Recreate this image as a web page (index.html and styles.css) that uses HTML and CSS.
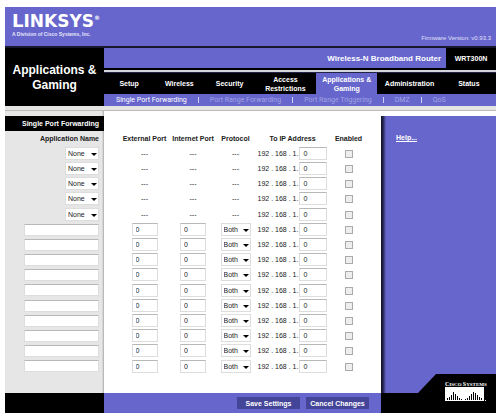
FILE: index.html
```html
<!DOCTYPE html>
<html lang="en">
<head>
<meta charset="utf-8">
<title>Single Port Forwarding</title>
<link rel="stylesheet" href="styles.css">
</head>
<body>
<div class="page">
  <header class="brand">
    <div>
      <div class="logo"><span class="logo-cap">L</span>INKSYS<sup>®</sup></div>
      <div class="tagline">A Division of Cisco Systems, Inc.</div>
    </div>
    <div class="firmware">Firmware Version: v0.93.3</div>
  </header>

  <div class="masthead">
    <h1 class="section-title">Applications &amp; Gaming</h1>
    <div class="masthead-main">
      <div class="product">
        <span class="product-name">Wireless-N Broadband Router</span>
        <span class="model">WRT300N</span>
      </div>
      <nav class="tabs">
        <a href="#">Setup</a>
        <a href="#">Wireless</a>
        <a href="#">Security</a>
        <a href="#" class="medium">Access Restrictions</a>
        <a href="#" class="medium active">Applications &amp; Gaming</a>
        <a href="#" class="wide">Administration</a>
        <a href="#" class="last">Status</a>
      </nav>
      <nav class="subtabs">
        <a href="#" class="active">Single Port Forwarding</a><i></i>
        <a href="#">Port Range Forwarding</a><i></i>
        <a href="#">Port Range Triggering</a><i></i>
        <a href="#">DMZ</a><i></i>
        <a href="#">QoS</a>
      </nav>
    </div>
  </div>

  <div class="divider"></div>

  <form class="content">
    <div class="panel">
      <div class="panel-top"></div>
      <h2 class="panel-title">Single Port Forwarding</h2>
      <table class="ports">
        <colgroup><col class="c-app"><col class="c-ext"><col class="c-int"><col class="c-proto"><col class="c-ip"><col class="c-on"></colgroup>
        <thead>
          <tr><th>Application Name</th><th>External Port</th><th>Internet Port</th><th>Protocol</th><th>To IP Address</th><th>Enabled</th></tr>
        </thead>
        <tbody>
          <tr><td><span class="pick"><select aria-label="Application 1"><option>None</option></select></span></td><td>---</td><td>---</td><td>---</td><td><label>192 . 168 . 1. <input type="text" value="0"></label></td><td><input type="checkbox" aria-label="Enable 1"></td></tr>
          <tr><td><span class="pick"><select aria-label="Application 2"><option>None</option></select></span></td><td>---</td><td>---</td><td>---</td><td><label>192 . 168 . 1. <input type="text" value="0"></label></td><td><input type="checkbox" aria-label="Enable 2"></td></tr>
          <tr><td><span class="pick"><select aria-label="Application 3"><option>None</option></select></span></td><td>---</td><td>---</td><td>---</td><td><label>192 . 168 . 1. <input type="text" value="0"></label></td><td><input type="checkbox" aria-label="Enable 3"></td></tr>
          <tr><td><span class="pick"><select aria-label="Application 4"><option>None</option></select></span></td><td>---</td><td>---</td><td>---</td><td><label>192 . 168 . 1. <input type="text" value="0"></label></td><td><input type="checkbox" aria-label="Enable 4"></td></tr>
          <tr><td><span class="pick"><select aria-label="Application 5"><option>None</option></select></span></td><td>---</td><td>---</td><td>---</td><td><label>192 . 168 . 1. <input type="text" value="0"></label></td><td><input type="checkbox" aria-label="Enable 5"></td></tr>
          <tr><td><input type="text" aria-label="Application 6"></td><td><input type="text" value="0" aria-label="External port 6"></td><td><input type="text" value="0" aria-label="Internet port 6"></td><td><span class="pick"><select aria-label="Protocol 6"><option>Both</option></select></span></td><td><label>192 . 168 . 1. <input type="text" value="0"></label></td><td><input type="checkbox" aria-label="Enable 6"></td></tr>
          <tr><td><input type="text" aria-label="Application 7"></td><td><input type="text" value="0" aria-label="External port 7"></td><td><input type="text" value="0" aria-label="Internet port 7"></td><td><span class="pick"><select aria-label="Protocol 7"><option>Both</option></select></span></td><td><label>192 . 168 . 1. <input type="text" value="0"></label></td><td><input type="checkbox" aria-label="Enable 7"></td></tr>
          <tr><td><input type="text" aria-label="Application 8"></td><td><input type="text" value="0" aria-label="External port 8"></td><td><input type="text" value="0" aria-label="Internet port 8"></td><td><span class="pick"><select aria-label="Protocol 8"><option>Both</option></select></span></td><td><label>192 . 168 . 1. <input type="text" value="0"></label></td><td><input type="checkbox" aria-label="Enable 8"></td></tr>
          <tr><td><input type="text" aria-label="Application 9"></td><td><input type="text" value="0" aria-label="External port 9"></td><td><input type="text" value="0" aria-label="Internet port 9"></td><td><span class="pick"><select aria-label="Protocol 9"><option>Both</option></select></span></td><td><label>192 . 168 . 1. <input type="text" value="0"></label></td><td><input type="checkbox" aria-label="Enable 9"></td></tr>
          <tr><td><input type="text" aria-label="Application 10"></td><td><input type="text" value="0" aria-label="External port 10"></td><td><input type="text" value="0" aria-label="Internet port 10"></td><td><span class="pick"><select aria-label="Protocol 10"><option>Both</option></select></span></td><td><label>192 . 168 . 1. <input type="text" value="0"></label></td><td><input type="checkbox" aria-label="Enable 10"></td></tr>
          <tr><td><input type="text" aria-label="Application 11"></td><td><input type="text" value="0" aria-label="External port 11"></td><td><input type="text" value="0" aria-label="Internet port 11"></td><td><span class="pick"><select aria-label="Protocol 11"><option>Both</option></select></span></td><td><label>192 . 168 . 1. <input type="text" value="0"></label></td><td><input type="checkbox" aria-label="Enable 11"></td></tr>
          <tr><td><input type="text" aria-label="Application 12"></td><td><input type="text" value="0" aria-label="External port 12"></td><td><input type="text" value="0" aria-label="Internet port 12"></td><td><span class="pick"><select aria-label="Protocol 12"><option>Both</option></select></span></td><td><label>192 . 168 . 1. <input type="text" value="0"></label></td><td><input type="checkbox" aria-label="Enable 12"></td></tr>
          <tr><td><input type="text" aria-label="Application 13"></td><td><input type="text" value="0" aria-label="External port 13"></td><td><input type="text" value="0" aria-label="Internet port 13"></td><td><span class="pick"><select aria-label="Protocol 13"><option>Both</option></select></span></td><td><label>192 . 168 . 1. <input type="text" value="0"></label></td><td><input type="checkbox" aria-label="Enable 13"></td></tr>
          <tr><td><input type="text" aria-label="Application 14"></td><td><input type="text" value="0" aria-label="External port 14"></td><td><input type="text" value="0" aria-label="Internet port 14"></td><td><span class="pick"><select aria-label="Protocol 14"><option>Both</option></select></span></td><td><label>192 . 168 . 1. <input type="text" value="0"></label></td><td><input type="checkbox" aria-label="Enable 14"></td></tr>
          <tr><td><input type="text" aria-label="Application 15"></td><td><input type="text" value="0" aria-label="External port 15"></td><td><input type="text" value="0" aria-label="Internet port 15"></td><td><span class="pick"><select aria-label="Protocol 15"><option>Both</option></select></span></td><td><label>192 . 168 . 1. <input type="text" value="0"></label></td><td><input type="checkbox" aria-label="Enable 15"></td></tr>
        </tbody>
      </table>
      <div class="actions">
        <button type="button">Save Settings</button>
        <button type="button">Cancel Changes</button>
      </div>
    </div>

    <aside class="help">
      <div class="help-body"><a href="#">Help...</a></div>
      <svg class="cisco" viewBox="0 0 115 39" role="img" aria-label="Cisco Systems">
        <path d="M0 19H37L55 0H115V39H0Z" fill="#000"/>
        <text x="64" y="12" class="cisco-name"><tspan class="cap">C</tspan>ISCO <tspan class="cap">S</tspan>YSTEMS</text>
        <path d="M64 13H103V27H64Z" fill="#fff"/>
        <path d="M66.5 24V27M68.5 23V27M70.5 21V27M72.5 18V27M74.5 20V27M76.5 22V27M78.5 24V27M80.5 25V27M84.5 25V27M86.5 24V27M88.5 22V27M90.5 20V27M92.5 18V27M94.5 19V27M96.5 21V27M98.5 23V27M100.5 24V27" stroke="#000"/>
        <path d="M64 26.5H106" stroke="#fff" stroke-dasharray="1 1"/>
      </svg>
    </aside>
  </form>
</div>
</body>
</html>
```

FILE: styles.css
```css
* { box-sizing: border-box; }

body {
  margin: 0;
  padding: 7px 4px 7px 5px;
  background: #fff;
  color: #222;
  font: 7px/9px "Liberation Sans", Arial, sans-serif;
}

a { color: inherit; text-decoration: none; }

.brand {
  display: flex;
  justify-content: space-between;
  align-items: flex-end;
  height: 41px;
  padding: 0 5px 4px 7px;
  background: #66c;
  border-bottom: 2px solid #181830;
  color: #fff;
}
.brand > div:first-child { padding-bottom: 4px; }
.logo { font: bold 17px/20px "DejaVu Sans", sans-serif; }
.logo-cap { font-size: 18px; }
.logo sup { font-size: 6px; line-height: 6px; vertical-align: 7px; }
.tagline { font-size: 5px; line-height: 7px; font-weight: bold; color: #e6e6fa; }
.firmware { font-size: 6px; line-height: 8px; color: #e0e0fa; }

.masthead { display: flex; background: #000; color: #fff; }
.section-title {
  display: flex;
  align-items: center;
  flex: 0 0 99px;
  margin: 0;
  padding: 2px 6px 0;
  font-size: 12px;
  line-height: 15px;
  text-align: center;
}
.masthead-main { flex: 1; min-width: 0; }

.product {
  display: flex;
  height: 24px;
  background: #66c;
  border-bottom: 2px solid #d4d4de;
  box-shadow: inset 0 -2px #000;
  font-weight: bold;
  line-height: 21px;
}
.product-name { flex: 1; padding-right: 5px; font-size: 8px; text-align: right; }
.model { width: 50px; background: #000; text-align: center; }

.tabs { display: flex; height: 22px; border-top: 1px solid #24244a; font-weight: bold; text-align: center; }
.tabs a { display: flex; flex: 50 1 0; align-items: center; justify-content: center; min-width: 0; }
.tabs a.medium { flex-grow: 61; }
.tabs a.active { background: #66c; }
.tabs a.wide { flex-grow: 64; }
.tabs a.last { flex-grow: 54; }

.subtabs {
  display: flex;
  align-items: center;
  height: 12px;
  padding-left: 12px;
  background: #66c;
  color: #a3a3e4;
  font-family: Roboto, "Liberation Sans", sans-serif;
  white-space: nowrap;
}
.subtabs .active { color: #fff; }
.subtabs i { width: 1px; height: 6px; margin: 0 11px; background: #d0d0f4; }

.divider { height: 5px; background: #e4e4e2; border-bottom: 1px solid #bbb; }

.content { display: flex; margin: 0; }
.panel { flex: 1; min-width: 0; background: linear-gradient(90deg, #e6e6e6 97px, #aaa 99px, #fff 99px); }
.panel-top { height: 5px; }
.panel-title {
  width: 99px;
  margin: 0;
  padding-right: 5px;
  background: #000;
  color: #fff;
  font-size: 7px;
  line-height: 15px;
  text-align: right;
  white-space: nowrap;
}

.ports { width: 100%; table-layout: fixed; border-collapse: collapse; }
.c-app { width: 99px; }
.c-ext { width: 65px; }
.c-int { width: 48px; }
.c-proto { width: 37px; }
.c-ip { width: 77px; }
.ports th, .ports td { padding: 0; height: 15px; line-height: 9px; text-align: center; vertical-align: middle; white-space: nowrap; }
.ports tr:nth-child(5n) td { height: 16px; }
.ports .pick, .ports td input { vertical-align: middle; }
.ports tr > :first-child { padding-right: 5px; text-align: right; }
.ports tr > :nth-child(2) { padding-left: 16px; }
.ports tr > :last-child { padding-right: 15px; }

input[type="text"], select {
  width: 26px;
  height: 13px;
  margin: 0;
  padding: 0 0 0 3px;
  border: 1px solid #ddd;
  border-top-color: #b8b8b8;
  border-radius: 0;
  background: #fff;
  color: #222;
  font: 7px/9px "Liberation Sans", Arial, sans-serif;
}
td:first-child input[type="text"] { width: 75px; height: 12px; }
label { display: flex; align-items: center; justify-content: center; gap: 1px; }
label input[type="text"] { width: 28px; }

.pick { position: relative; display: inline-flex; }
.pick::after {
  content: "";
  position: absolute;
  right: 2px;
  top: 6px;
  border: 3px solid transparent;
  border-top-color: #000;
  border-bottom: 0;
  pointer-events: none;
}
select { appearance: none; width: 30px; padding-left: 2px; border-color: #ddd; }
td:first-child select { width: 34px; }

input[type="checkbox"] {
  appearance: none;
  width: 8px;
  height: 8px;
  margin: 0;
  border: 1px solid #aaa;
  background: #eee;
}
input[type="checkbox"]:checked { background: #66c; }

.actions {
  display: flex;
  justify-content: flex-end;
  gap: 6px;
  height: 20px;
  margin-top: 19px;
  padding: 4px 12px 4px 0;
  background: linear-gradient(90deg, #000 99px, #66c 99px);
}
.actions button {
  width: 63px;
  padding: 0;
  border: 0;
  background: #449;
  color: #fff;
  font: bold 7px/9px "Liberation Sans", Arial, sans-serif;
}

.help {
  display: flex;
  flex: 0 0 115px;
  flex-direction: column;
  margin-top: 5px;
  background: linear-gradient(90deg, #111128, #22224a 2px, #66c 5px);
}
.help-body { flex: 1; padding: 17px 15px; color: #fff; font-weight: bold; }
.help-body a { text-decoration: underline; }
.cisco { display: block; width: 100%; }
.cisco-name { fill: #fff; font: bold 5px "Liberation Serif", serif; }
.cisco-name .cap { font-size: 6px; }
```
